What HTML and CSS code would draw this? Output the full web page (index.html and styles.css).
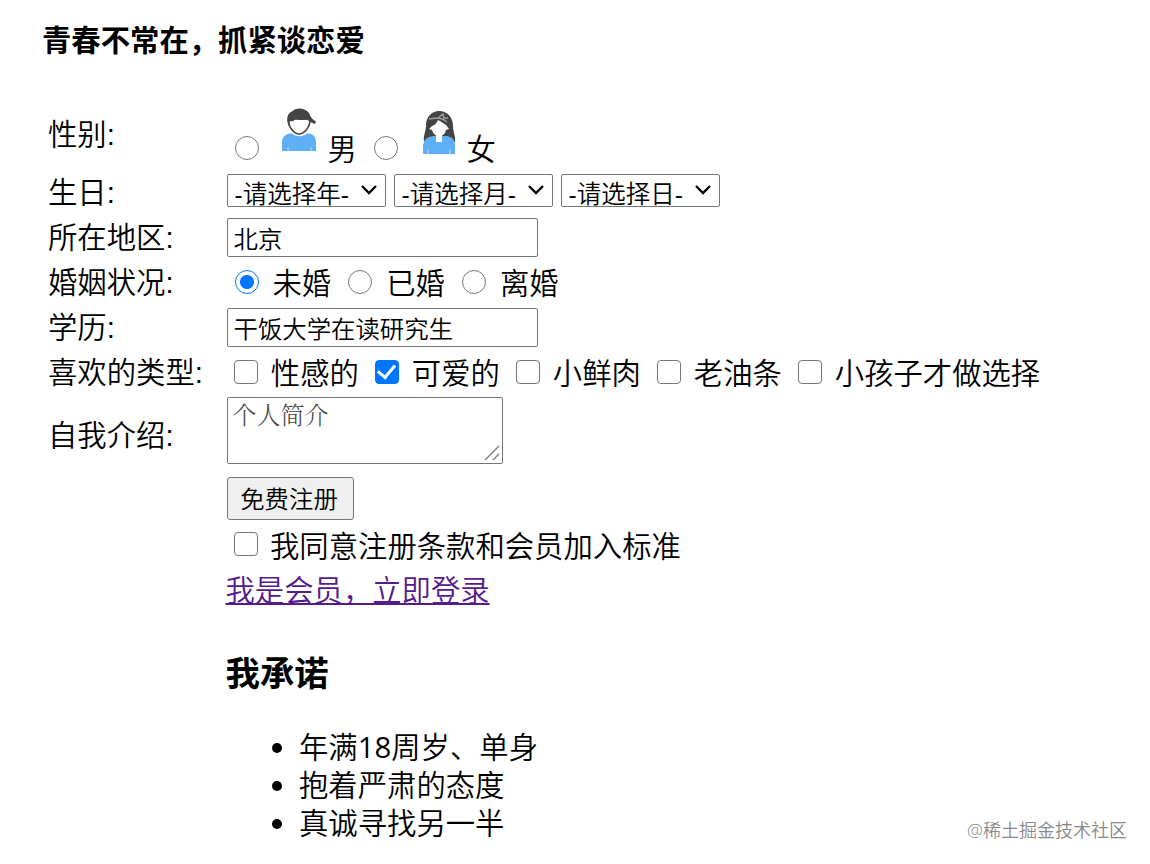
FILE: index.html
```html
<!DOCTYPE html>
<html lang="zh-CN">
<head>
<meta charset="utf-8">
<title>注册</title>
<link rel="stylesheet" href="styles.css">
</head>
<body>
<h4 class="slogan">青春不常在，抓紧谈恋爱</h4>
<form class="form">
  <span class="name sex-name">性别:</span>
  <div class="field gender">
    <label class="person"><input class="radio" type="radio" name="sex">
      <svg class="avatar" width="38" height="46" viewBox="0 0 38 46">
        <path d="M1 44V36C1 29 5 26.500 11 26.500C15 30 22 30 26 26.500C32 26.500 35 29 35 36V44Z" fill="#5eaff5"/>
        <path d="M7 44V40M30 44V40" stroke="#b5dcff" stroke-width="1"/>
        <path d="M7.500 12C7 20 13 27 18 27C23 27 29.500 20 29 12Z" fill="#fff" stroke="#444" stroke-width="1.600"/>
        <path d="M7 17C5 11 7 6 11 4.500C15 0 24 .5 28 6Q30 12 35 14.500L34 17Q29 16 26 12.500Q20 13.500 15 12Q12 15 9 14L8 19Z" fill="#444"/>
      </svg><span>男</span></label>
    <label class="person"><input class="radio" type="radio" name="sex">
      <svg class="avatar female" width="38" height="46" viewBox="0 0 38 46">
        <path d="M2 32C1 26 4 21 4 15C4 7 10 1 17 1C26 1 31 8 31 16C31 22 34 27 33 32Z" fill="#444"/>
        <path d="M1 44V35Q2 27 11 26H25Q33 27 33 35V44Z" fill="#5eaff5"/>
        <path d="M6 44V39M28 44V39" stroke="#b5dcff" stroke-width="1"/>
        <path d="M14 24H20V32H14Z" fill="#fff"/>
        <path d="M7 19L10 16Q14 15 16 10Q20 12 24 15L27 19L24 20C23 24 21 26 17 26C13 26 11 23 10 20Z" fill="#fff"/>
        <path d="M7 9Q12 8 17 8Q22 9 25 12M17 7L21 4L22 8L26 8" fill="none" stroke="#999" stroke-width="1.500"/>
      </svg><span>女</span></label>
  </div>

  <span class="name">生日:</span>
  <div class="field dates">
    <div class="select"><span>-请选择年-</span><svg width="18" height="12" viewBox="0 0 18 12"><path d="M2 2L9 9L16 2"/></svg></div>
    <div class="select"><span>-请选择月-</span><svg width="18" height="12" viewBox="0 0 18 12"><path d="M2 2L9 9L16 2"/></svg></div>
    <div class="select"><span>-请选择日-</span><svg width="18" height="12" viewBox="0 0 18 12"><path d="M2 2L9 9L16 2"/></svg></div>
  </div>

  <span class="name">所在地区:</span>
  <div class="field entry"><input class="text" type="text" value="北京"></div>

  <span class="name">婚姻状况:</span>
  <div class="field marital">
    <label><input class="radio" type="radio" name="marry" checked>未婚</label>
    <label><input class="radio" type="radio" name="marry">已婚</label>
    <label><input class="radio" type="radio" name="marry">离婚</label>
  </div>

  <span class="name">学历:</span>
  <div class="field entry"><input class="text" type="text" value="干饭大学在读研究生"></div>

  <span class="name">喜欢的类型:</span>
  <div class="field types">
    <label><input class="check" type="checkbox">性感的</label>
    <label><input class="check" type="checkbox" checked>可爱的</label>
    <label><input class="check" type="checkbox">小鲜肉</label>
    <label><input class="check" type="checkbox">老油条</label>
    <label><input class="check" type="checkbox">小孩子才做选择</label>
  </div>

  <span class="name">自我介绍:</span>
  <div class="field intro">
    <div class="area"><span>个人简介</span><svg class="grip" width="16" height="16" viewBox="0 0 16 16"><path d="M1 15L15 1M9 15L15 9"/></svg></div>
  </div>

  <div class="rest">
    <button class="submit" type="button">免费注册</button>
    <label class="agree"><input class="check" type="checkbox">我同意注册条款和会员加入标准</label>
    <a class="login" href="#">我是会员，立即登录</a>
    <h3 class="promise">我承诺</h3>
    <ul class="list">
      <li>年满<span class="digits">18</span>周岁、单身</li>
      <li>抱着严肃的态度</li>
      <li>真诚寻找另一半</li>
    </ul>
  </div>
</form>
<footer class="mark">@稀土掘金技术社区</footer>
</body>
</html>
```
FILE: styles.css
```css
* { box-sizing: border-box; }
body {
  position: relative;
  margin: 0;
  height: 864px;
  overflow: hidden;
  background: #fff;
  color: #000;
  font: 350 29.35px/38px "Open Sans", "Noto Sans CJK SC", sans-serif;
  white-space: nowrap;
}
h3, h4, ul { margin: 0; }
.slogan { padding: 21px 0 0 42px; font-size: 29.35px; font-weight: 700; }
.form {
  display: grid;
  grid-template-columns: 178.500px 1fr;
  grid-template-rows: 67px repeat(5, 45px) 80px auto;
  align-items: center;
  padding: 44.500px 0 0 48px;
}
.name { font-family: "Liberation Sans", "Noto Sans CJK SC", sans-serif; }
.sex-name { padding-bottom: 4px; }
.field, .field label { display: flex; align-items: center; }
.radio, .check {
  appearance: none;
  flex: none;
  width: 24px;
  height: 24px;
  margin: 0;
  border: 1.500px solid #767676;
  background: #fff;
}
.radio { border-radius: 50%; }
.check { border-radius: 4px; }
.radio:checked {
  border-color: #0075ff;
  background: radial-gradient(circle, #0075ff 6.500px, #fff 7.500px);
}
.check:checked { border-color: #0075ff; background: #0075ff; display: grid; place-items: center; }
.check:checked::before {
  content: "";
  width: 8px;
  height: 14px;
  border: solid #fff;
  border-width: 0 3px 3px 0;
  transform: translateY(-2px) rotate(40deg);
}
.field.gender { align-self: stretch; align-items: stretch; padding-left: 8px; }
.field .person { width: 139px; align-items: flex-start; }
.person .radio { margin-top: 32px; }
.avatar { margin: 3px 0 0 22px; }
.avatar.female { margin-top: 6px; margin-left: 24px; }
.person span { margin: 26px 0 0 9px; }
.female + span { margin-left: 7px; }
.dates { gap: 8px; padding-bottom: 5px; }
.select {
  display: flex;
  width: 159px;
  height: 33px;
  padding: 3px 7px 0;
  border: 1.500px solid #767676;
  border-radius: 2px;
  justify-content: space-between;
  font-family: "Liberation Sans", "Noto Sans CJK SC", sans-serif;
  font-size: 24.5px;
  line-height: 33px;
}
.select svg { margin-top: 6px; }
.select path { fill: none; stroke: #000; stroke-width: 2.300; }
.entry { padding-bottom: 2px; }
.text {
  width: 311px;
  height: 39px;
  padding: 0 6px;
  border: 1.500px solid #767676;
  border-radius: 2px;
  font: inherit;
  font-size: 24.4px;
  color: #000;
}
.marital { padding-left: 8px; }
.marital label { width: 113.7px; gap: 14px; }
.types { padding-left: 7px; }
.types label { width: 141px; gap: 13.3px; }
.types .check, .marital .radio { margin-top: -3px; }
.intro { align-self: start; padding-top: 1px; }
.area {
  display: flex;
  justify-content: space-between;
  width: 276px;
  height: 67px;
  padding: 0 2px 2px 5px;
  border: 1.500px solid #767676;
  border-radius: 2px;
  font-size: 24px;
  line-height: 32px;
  font-family: "Noto Serif CJK SC", "Noto Sans CJK SC", serif;
  color: #444;
}
.grip { align-self: flex-end; }
.grip path { stroke: #777; stroke-width: 1.200; }
.rest { grid-column: 2; display: flex; flex-direction: column; align-items: flex-start; padding-top: 1px; }
.submit {
  width: 127px;
  height: 43px;
  padding: 2px 2px 0 0;
  border: 1.500px solid #767676;
  border-radius: 3px;
  background: #efefef;
  color: #000;
  font: inherit;
  font-size: 24.4px;
}
.agree { display: flex; align-items: center; gap: 12.500px; padding: 7px 0 0 7px; }
.agree .check { margin-top: -3px; }
.login { margin: 6px 0 0 -1px; color: #551a8b; text-decoration-thickness: 2px; text-underline-offset: 2px; }
.promise { margin: 39px 0 0 -1px; font-size: 34.4px; line-height: 50px; font-weight: 700; }
.list { margin-top: 30px; padding-left: 72.500px; }
.digits { font-weight: 400; }
.mark {
  position: absolute;
  right: 23px;
  bottom: 20px;
  color: #888;
  font-size: 18px;
  line-height: 28px;
}
```
